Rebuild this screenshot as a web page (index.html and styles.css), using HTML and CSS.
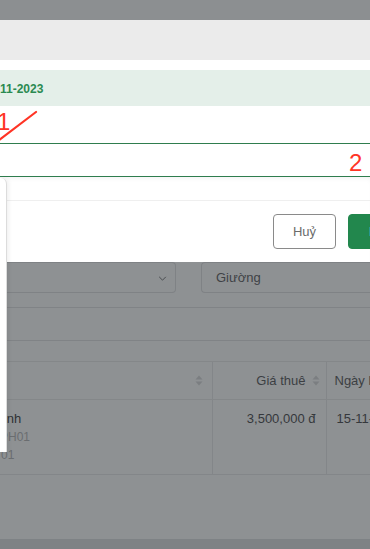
FILE: index.html
```html
<!DOCTYPE html>
<html>
<head>
    <title>Hợp đồng thuê - Chọn giường</title>
    <link rel="stylesheet" href="styles.css">
</head>
<body>
    <div class="page">
        <div class="top-bar"></div>
        <div class="tool-bar"></div>
        <div class="spacer"></div>

        <div class="date-row">
            <span class="date-text">11-2023</span>
        </div>

        <!-- annotated rows -->
        <div class="note-row">
            <span class="mark mark-one">1</span>
            <svg class="mark-line" viewBox="0 0 40 32" xmlns="http://www.w3.org/2000/svg">
                <line x1="-2" y1="32" x2="36" y2="3" stroke="#ff3425" stroke-width="2.2" stroke-linecap="round"/>
            </svg>
        </div>
        <div class="field-row">
            <span class="mark mark-two">2</span>
        </div>

        <div class="stage">
            <div class="popup-edge"></div>

            <div class="sheet">
                <div class="sheet-head"></div>
                <div class="sheet-foot">
                    <button class="btn btn-cancel">Huỷ</button>
                    <button class="btn btn-ok">Lưu</button>
                </div>
            </div>

            <div class="backdrop">
                <div class="filters">
                    <div class="select-box">
                        <svg class="chevron" viewBox="0 0 10 6" xmlns="http://www.w3.org/2000/svg">
                            <path d="M1 1l4 4 4-4" fill="none" stroke="#4a4d50" stroke-width="1.2"/>
                        </svg>
                    </div>
                    <div class="input-box">Giường</div>
                </div>

                <div class="tab-bar"></div>

                <table class="data-table">
                    <colgroup>
                        <col class="col-room">
                        <col class="col-price">
                        <col class="col-date">
                    </colgroup>
                    <thead>
                        <tr>
                            <th>
                                <div class="th-inner">
                                    <svg class="sort-icon" viewBox="0 0 8 11" xmlns="http://www.w3.org/2000/svg">
                                        <path d="M4 0.5L7.5 4.5H0.5z M4 10.5L0.5 6.5H7.5z"/>
                                    </svg>
                                </div>
                            </th>
                            <th class="th-price">
                                <div class="th-inner">
                                    <span>Giá thuê</span>
                                    <svg class="sort-icon" viewBox="0 0 8 11" xmlns="http://www.w3.org/2000/svg">
                                        <path d="M4 0.5L7.5 4.5H0.5z M4 10.5L0.5 6.5H7.5z"/>
                                    </svg>
                                </div>
                            </th>
                            <th class="th-date">Ngày bắt đầu</th>
                        </tr>
                    </thead>
                    <tbody>
                        <tr>
                            <td class="cell-room">
                                <div class="room-name">Anh</div>
                                <div class="room-sub">PH01</div>
                                <div class="room-sub room-sub-last">01</div>
                            </td>
                            <td class="cell-price">3,500,000 đ</td>
                            <td class="cell-date">15-11-2023</td>
                        </tr>
                    </tbody>
                </table>
            </div>

            <div class="bottom-bar"></div>
        </div>
    </div>
</body>
</html>
```

FILE: styles.css
```css
body {
    margin: 0;
    padding: 0;
    background: #fff;
    font-family: 'Liberation Sans', Arial, sans-serif;
    overflow: hidden;
}
.page {
    width: 370px;
    height: 549px;
    overflow: hidden;
    display: flex;
    flex-direction: column;
}
.top-bar {
    height: 20px;
    background: #8c8f91;
}
.tool-bar {
    height: 40px;
    background: #ebebeb;
}
.spacer {
    height: 10px;
    background: #fff;
}
.date-row {
    height: 36px;
    background: #e4efe9;
    display: flex;
    align-items: center;
}
.date-text {
    color: #2b8a51;
    font-size: 12px;
    font-weight: bold;
    margin-top: 1px;
}

/* Annotations */
.note-row {
    position: relative;
    height: 37px;
    background: #fff;
}
.mark {
    position: absolute;
    color: #ff3425;
    font-size: 24px;
    line-height: 24px;
}
.mark-one {
    left: -3px;
    top: 4px;
}
.mark-line {
    position: absolute;
    left: 0;
    top: 3px;
    width: 40px;
    height: 32px;
    overflow: visible;
}
.field-row {
    position: relative;
    height: 32px;
    border-top: 1px solid #2f7d4e;
    border-bottom: 1px solid #2f7d4e;
    background: #fff;
}
.mark-two {
    left: 349px;
    top: 7px;
}

/* Sheet + backdrop */
.stage {
    position: relative;
    flex: 1;
    display: flex;
    flex-direction: column;
}
.popup-edge {
    position: absolute;
    left: 0;
    top: 1px;
    width: 6px;
    height: 274px;
    background: #fff;
    border-right: 1px solid #dcdcdc;
    border-top-right-radius: 6px;
    box-shadow: 2px 0 4px rgba(0,0,0,0.06);
    z-index: 2;
}
.sheet {
    background: #fff;
    box-shadow: inset 0 4px 6px -4px rgba(0,0,0,0.08);
}
.sheet-head {
    height: 23px;
    border-bottom: 1px solid #efefef;
}
.sheet-foot {
    display: flex;
    gap: 12px;
    padding: 13px 0 13px 273px;
    overflow: hidden;
}
.btn {
    flex-shrink: 0;
    height: 35px;
    border-radius: 4px;
    font-family: 'Liberation Sans', Arial, sans-serif;
    font-size: 13px;
    cursor: pointer;
}
.btn-cancel {
    width: 63px;
    background: #fff;
    border: 1px solid #8a8a8a;
    color: #6b6b6b;
}
.btn-ok {
    padding: 0 20px;
    background: #22874d;
    border: 1px solid #22874d;
    color: #fff;
}
.backdrop {
    height: 277px;
    background: #8e9193;
    overflow: hidden;
}
.filters {
    display: grid;
    grid-template-columns: 176px 1fr;
    gap: 25px;
}
.select-box, .input-box {
    height: 29px;
    border: 1px solid #7f8285;
    display: flex;
    align-items: center;
}
.select-box {
    border-left: none;
    border-radius: 0 4px 4px 0;
    justify-content: flex-end;
    padding-right: 8px;
}
.chevron {
    width: 9px;
    height: 5px;
    margin-top: 2px;
}
.input-box {
    border-right: none;
    border-radius: 4px 0 0 4px;
    padding-left: 14px;
    font-size: 13px;
    color: #3f4246;
}
.tab-bar {
    height: 32px;
    margin-top: 14px;
    border-top: 1px solid #808386;
    border-bottom: 1px solid #808386;
}

/* Table */
.data-table {
    margin-top: 20px;
    width: 480px;
    table-layout: fixed;
    border-collapse: collapse;
    font-size: 13px;
}
.col-room { width: 212px; }
.col-price { width: 114px; }
.col-date { width: 154px; }
.data-table th {
    height: 37px;
    padding: 0;
    font-weight: normal;
    color: #3c3f43;
    text-align: left;
    border-top: 1px solid #848789;
    border-bottom: 1px solid #848789;
}
.data-table th + th, .data-table td + td {
    border-left: 1px solid #838689;
}
.th-inner {
    display: flex;
    align-items: center;
    justify-content: flex-end;
    gap: 6px;
    padding-right: 9px;
}
.th-price .th-inner {
    padding-right: 6px;
}
.th-date {
    padding-left: 8px !important;
}
.sort-icon {
    width: 8px;
    height: 11px;
    fill: #7b7e81;
}
.data-table td {
    height: 64px;
    vertical-align: top;
    padding: 10px 0 0 0;
    color: #35383c;
    border-bottom: 1px solid #838689;
    line-height: 18px;
}
.room-name {
    color: #2e3134;
    margin-left: -2px;
}
.room-sub {
    font-size: 12px;
    color: #6a6d70;
}
.room-sub-last {
    padding-left: 1px;
}
.cell-price {
    text-align: right;
    padding-right: 10px !important;
}
.cell-date {
    padding-left: 10px !important;
}
.bottom-bar {
    height: 10px;
    background: #7e8285;
}
```
